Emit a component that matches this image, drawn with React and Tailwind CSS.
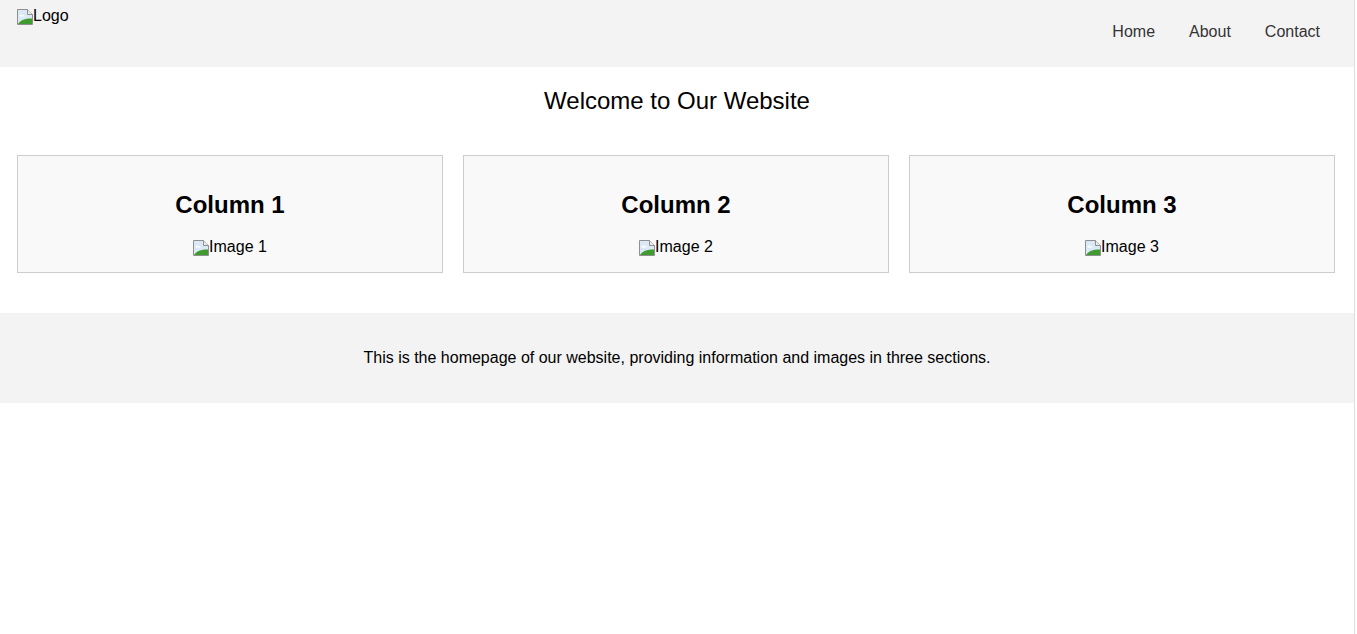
function BrokenImg({ alt }) {
  return (
    <span className="inline-flex items-end">
      <svg width="16" height="16" viewBox="0 0 16 16" className="h-4 w-4 shrink-0">
        <path d="M0.5 0.5h10l5 5v10h-15z" fill="#dbe9f6" stroke="#8f8f8f" />
        <path d="M2.5 6.5c.8-1.4 2.6-1.4 3.2 0 .9-.5 2-.1 2 .9H2.5z" fill="#ffffff" />
        <path d="M1 15c2.8-4 6.5-5.5 14-5.5V15z" fill="#3f9a2f" />
        <path d="M10.5 0.5v5h5" fill="#ececec" stroke="#8f8f8f" />
      </svg>
      <span>{alt}</span>
    </span>
  );
}

function Column({ n }) {
  return (
    <div className="flex-1 border border-[#cccccc] bg-[#f9f9f9] p-4 text-center">
      <h2 className="mt-[19px] mb-[20px] text-[24px] font-bold leading-[27px]">Column {n}</h2>
      <div className="flex h-[18px] justify-center leading-[18px]">
        <BrokenImg alt={`Image ${n}`} />
      </div>
    </div>
  );
}

export default function App() {
  return (
    <div
      className="flex min-h-[634px] bg-white text-black text-[16px]"
      style={{ fontFamily: '"Liberation Sans", Arial, sans-serif' }}
    >
      <div className="w-[1355px] shrink-0 border-r border-[#dedede]">
        <header className="flex h-[67px] justify-between bg-[#f3f3f3]">
          <div className="pl-[17px] pt-[7px] leading-[18px]">
            <BrokenImg alt="Logo" />
          </div>
          <nav className="flex gap-[34px] pr-[34px] pt-[23px] leading-[18px] text-[#333333]">
            <span>Home</span>
            <span>About</span>
            <span>Contact</span>
          </nav>
        </header>

        <h1 className="mt-[20px] text-center text-[24px] font-normal leading-[28px]">
          Welcome to Our Website
        </h1>

        <div className="mt-[40px] flex gap-[20px] pl-[17px] pr-[19px]">
          <Column n={1} />
          <Column n={2} />
          <Column n={3} />
        </div>

        <footer className="mt-[40px] flex h-[90px] items-center justify-center bg-[#f3f3f3]">
          <p className="leading-[18px]">
            This is the homepage of our website, providing information and images in three sections.
          </p>
        </footer>
      </div>
    </div>
  );
}
